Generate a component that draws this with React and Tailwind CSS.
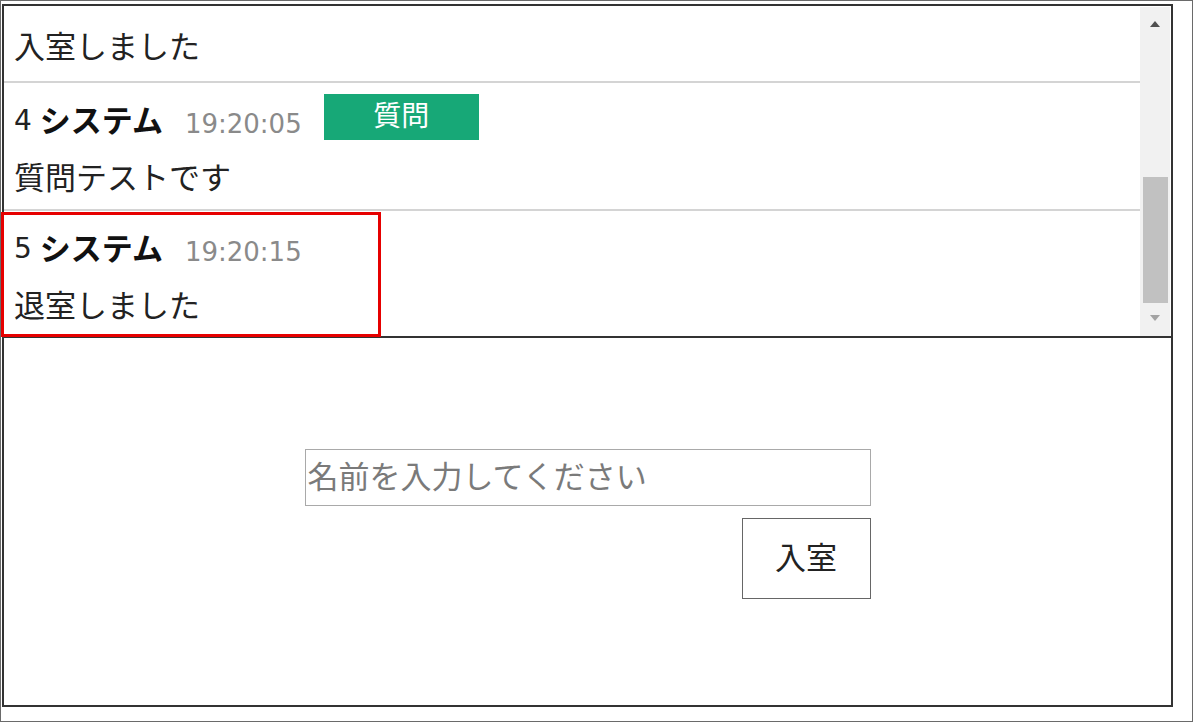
import React from "react";

const jp = { fontFamily: '"DejaVu Sans", "Noto Sans CJK JP", sans-serif' };

function Row({ num, name, time, tag, body }) {
  return (
    <div className="border-b-2 border-[#d4d4d4] pl-[10px]">
      <div className="h-[12px]" />
      <div className="flex h-[52px] items-center">
        <span className="text-[28px] text-[#222]">{num}</span>
        <span className="ml-[8px] text-[31px] font-bold text-[#111]">{name}</span>
        <span className="ml-[22px] mt-[6px] text-[26px] text-[#8a8a8a]">{time}</span>
        {tag && (
          <span className="ml-[22px] -mt-[8px] flex h-[46px] w-[155px] items-center justify-center bg-[#17a877] text-[28px] text-white">
            {tag}
          </span>
        )}
      </div>
      <div className="flex h-[62px] items-center text-[31px] text-[#222]">{body}</div>
    </div>
  );
}

export default function App() {
  return (
    <div className="h-[722px] w-[1193px] bg-white" style={jp}>
      <div className="h-[722px] w-[1193px] border border-[#6a6a6a] pl-[1px] pt-[3px]">
        <div className="relative flex h-[703px] w-[1171px] flex-col border-2 border-[#333] bg-white">
          <div className="flex h-[332px] border-b-2 border-[#333]">
            <div className="flex-1 overflow-hidden">
              <div className="h-[77px] border-b-2 border-[#d4d4d4] pl-[10px] pt-[9px]">
                <div className="flex h-[64px] items-center text-[31px] text-[#222]">入室しました</div>
              </div>
              <Row num="4" name="システム" time="19:20:05" tag="質問" body="質問テストです" />
              <Row num="5" name="システム" time="19:20:15" body="退室しました" />
            </div>
            <div className="mr-[1px] mt-[1px] flex w-[30px] flex-col items-center bg-[#f1f1f1]">
              <div className="flex h-[34px] items-center justify-center">
                <svg width="12" height="8" viewBox="0 0 12 8">
                  <polygon points="6,1 11,7 1,7" fill="#505050" />
                </svg>
              </div>
              <div className="h-[136px]" />
              <div className="h-[126px] w-[25px] bg-[#c1c1c1]" />
              <div className="flex h-[30px] items-center justify-center">
                <svg width="12" height="8" viewBox="0 0 12 8">
                  <polygon points="1,1 11,1 6,7" fill="#a3a3a3" />
                </svg>
              </div>
            </div>
          </div>
          <div className="flex flex-1 items-center justify-center pt-[4px]">
            <div className="flex w-[566px] flex-col items-end gap-[12px]">
              <input
                className="h-[57px] w-[566px] border border-[#a9a9a9] px-[2px] text-[31px] text-[#333] outline-none placeholder:text-[#7a7a7a]"
                placeholder="名前を入力してください"
                style={jp}
              />
              <button
                className="h-[81px] w-[129px] border border-[#666] bg-white text-[31px] text-[#222]"
                style={jp}
              >
                入室
              </button>
            </div>
          </div>
          <div className="absolute -left-[3px] top-[206px] h-[125px] w-[380px] border-[3px] border-[#e60000]" />
        </div>
      </div>
    </div>
  );
}
